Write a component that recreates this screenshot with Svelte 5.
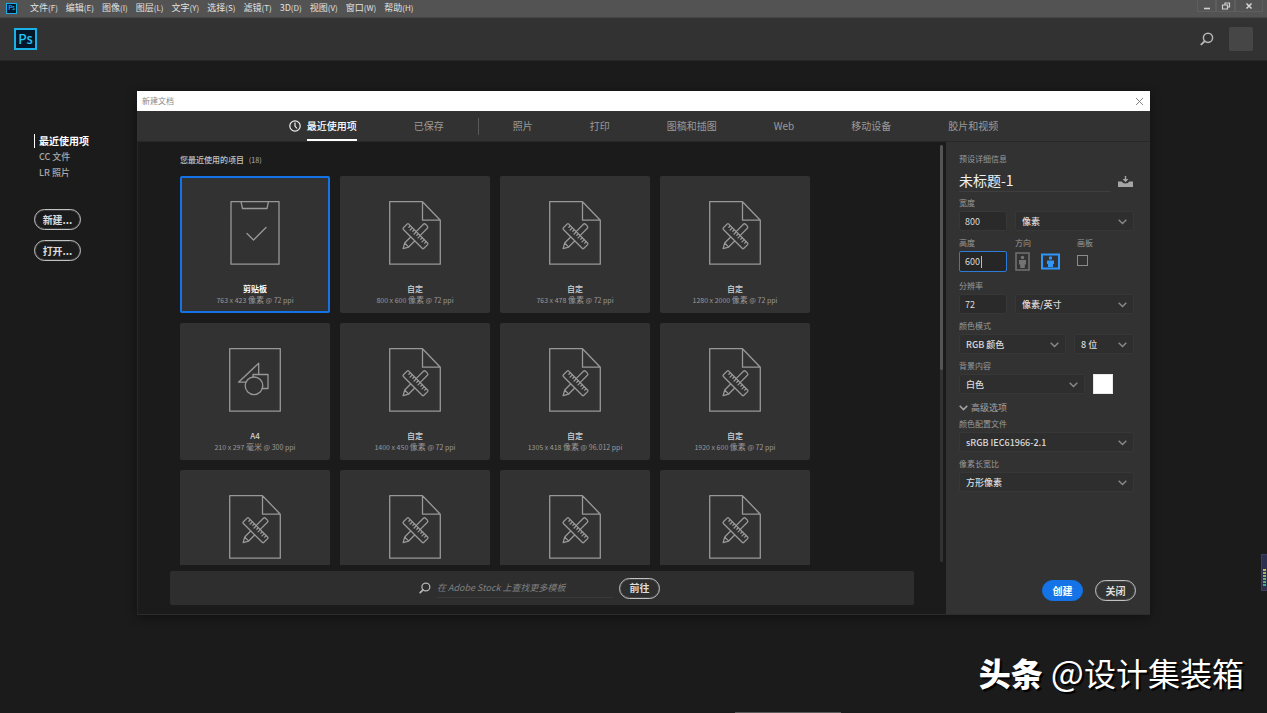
<script>
  const menus = [['文件', '(F)'], ['编辑', '(E)'], ['图像', '(I)'], ['图层', '(L)'], ['文字', '(Y)'], ['选择', '(S)'], ['滤镜', '(T)'], ['3D', '(D)'], ['视图', '(V)'], ['窗口', '(W)'], ['帮助', '(H)']];
  const places = ['最近使用项', 'CC 文件', 'LR 照片'];
  const tabs = ['已保存', '|', '照片', '打印', '图稿和插图', 'Web', '移动设备', '胶片和视频'];
  const presets = [
    { kind: 'clip', name: '剪贴板', size: '763 x 423', unit: '像素', ppi: '72' },
    { kind: 'doc', name: '自定', size: '800 x 600', unit: '像素', ppi: '72' },
    { kind: 'doc', name: '自定', size: '763 x 478', unit: '像素', ppi: '72' },
    { kind: 'doc', name: '自定', size: '1280 x 2000', unit: '像素', ppi: '72' },
    { kind: 'print', name: 'A4', size: '210 x 297', unit: '毫米', ppi: '300' },
    { kind: 'doc', name: '自定', size: '1400 x 450', unit: '像素', ppi: '72' },
    { kind: 'doc', name: '自定', size: '1305 x 418', unit: '像素', ppi: '96.012' },
    { kind: 'doc', name: '自定', size: '1920 x 600', unit: '像素', ppi: '72' },
    { kind: 'doc' },
    { kind: 'doc' },
    { kind: 'doc' },
    { kind: 'doc' }
  ];
  let selected = $state(0);
  let docName = $state('未标题-1');
  let width = $state('800');
  let height = $state('600');
  let resolution = $state('72');
</script>

{#snippet search()}
  <svg class="search" width="14" height="14" viewBox="0 0 14 14" fill="none" stroke="currentColor" aria-hidden="true">
    <circle cx="8" cy="5.8" r="4.6" stroke-width="1.5" />
    <path d="M4.7 9.1 1.4 12.4" stroke-width="2" stroke-linecap="round" />
  </svg>
{/snippet}

{#snippet picker(id, value)}
  <span class="picker">
    <select {id} aria-label={value}><option>{value}</option></select>
    <svg width="9" height="6" viewBox="0 0 9 6" fill="none" stroke="#8a8a8a" stroke-width="1.4" aria-hidden="true"><path d="M.7.8 4.5 4.6 8.3.8" /></svg>
  </span>
{/snippet}

{#snippet art(kind)}
  <svg width="52" height="64" viewBox="0 0 52 64" fill="none" stroke="#989898" stroke-width="1.3" stroke-linejoin="round" stroke-linecap="round" aria-hidden="true">
    {#if kind === 'clip'}
      <path d="M2 .7h48v62.500H2zM12 .7 13.500 7.500h24.500L39.500 .7" />
      <path d="m18 32.500 6.500 6.500 12.500-12.500" />
    {:else if kind === 'print'}
      <path d="M.7 .7h50.600v62.500H.7z" />
      <path d="M17 34.200H9.500L29.700 15.200V26.200M24 29.200V26.500h15v14h-6" />
      <circle cx="25" cy="37.800" r="8.800" />
    {:else}
      <path d="M.7 .7h32.800L51.300 19.200v44H.7zM33.500 .7v18.500h17.800" />
      <g transform="translate(26.500 35.200) rotate(45)" stroke-width="1.3">
        <rect x="-14.500" y="-3.800" width="29" height="7.600" rx="1.200" />
        <path d="M-11-3.800v2.200M-8.200-3.800v3.200M-5.400-3.800v2.200M-2.600-3.800v3.200M.2-3.800v2.200M3-3.800v3.200M5.800-3.800v2.200M8.600-3.800v3.200M11.400-3.800v2.200" />
        <path d="M-2.800-4v-10q0-1.500 1.500-1.500h2.600q1.500 0 1.500 1.500v10M-2.800 4v8.500L0 17.500l2.800-5V4M-2.600 12.500h5.200" />
      </g>
    {/if}
  </svg>
{/snippet}

<div class="app">
  <nav class="menubar">
    <span class="ps small">Ps</span>
    {#each menus as [m, k]}<button>{m}<kbd>{k}</kbd></button>{/each}
    <span class="wins">
      <button aria-label="最小化"><svg width="10" height="10" viewBox="0 0 10 10"><path d="M2 7.500h6" stroke="#d0d0d0" stroke-width="1.600" /></svg></button>
      <button aria-label="还原"><svg width="10" height="10" viewBox="0 0 10 10" fill="none" stroke="#d0d0d0" stroke-width="1.200"><path d="M4 4V2h4.500v4h-2M1.500 4h5v4h-5z" /></svg></button>
      <button aria-label="关闭窗口"><svg width="10" height="10" viewBox="0 0 10 10"><path d="m2.500 2.500 5 5m0-5-5 5" stroke="#d8d8d8" stroke-width="1.500" /></svg></button>
    </span>
  </nav>

  <header>
    <span class="ps">Ps</span>
    <button class="find" aria-label="搜索">{@render search()}</button>
    <button class="avatar" aria-label="帐户"></button>
  </header>

  <main>
    <aside>
      <nav class="places">
        {#each places as p, i}<a href="#top" class:on={i === 0}>{p}</a>{/each}
      </nav>
      <button class="pill">新建...</button>
      <button class="pill">打开...</button>
    </aside>

    <section class="dialog">
      <div class="titlebar">
        <h1>新建文档</h1>
        <button aria-label="关闭对话框"><svg width="9" height="9" viewBox="0 0 9 9"><path d="m1 1 7 7m0-7L1 8" stroke="#777" stroke-width=".9" /></svg></button>
      </div>
      <nav class="tabs">
        <button class="tab on">
          <svg width="12" height="12" viewBox="0 0 12 12" fill="none" stroke="#f0f0f0" stroke-width="1.200" aria-hidden="true"><circle cx="6" cy="6" r="5.200" /><path d="M6 2.500V6l2 2.500" /></svg>
          <span>最近使用项</span>
        </button>
        {#each tabs as t}
          {#if t === '|'}<i class="rule"></i>{:else}<button class="tab">{t}</button>{/if}
        {/each}
      </nav>

      <div class="body">
        <div class="browse">
          <div class="scroll">
            <div class="list">
              <h2>您最近使用的项目 <small>(18)</small></h2>
              <div class="grid">
                {#each presets as p, i}
                  <button class="card" class:sel={selected === i} aria-label={p.name ?? '自定'} onclick={() => (selected = i)}>
                    {@render art(p.kind)}
                    {#if p.name}<strong>{p.name}</strong><span>{p.size} <em>{p.unit}</em> @ {p.ppi} ppi</span>{/if}
                  </button>
                {/each}
              </div>
            </div>
            <div class="track"><div class="thumb"></div></div>
          </div>
          <form class="stock">
            {@render search()}
            <input aria-label="搜索模板" placeholder="在 Adobe Stock 上查找更多模板" />
            <button type="button" class="pill">前往</button>
          </form>
        </div>

        <form class="details">
          <h3>预设详细信息</h3>
          <div class="name">
            <input aria-label="名称" bind:value={docName} />
            <button type="button" aria-label="存储预设">
              <svg width="15" height="11" viewBox="0 0 15 11" fill="#a5a5a5"><path d="M0 5.500h3.800q.7 2 3.700 2t3.700-2H15V11H0z" /><path d="M6.800 0h1.400v3h2.200L7.500 6.300 4.600 3h2.200z" /></svg>
            </button>
          </div>

          <div class="row">
            <div class="field num"><label for="w">宽度</label><input id="w" bind:value={width} /></div>
            <div class="field grow"><label for="unit" class="blank">单位</label>{@render picker('unit', '像素')}</div>
          </div>
          <div class="row orient">
            <div class="field num"><label for="h">高度</label><span class="focus"><input id="h" bind:value={height} /><i></i></span></div>
            <div class="field dir">
              <span class="label">方向</span>
              <div>
                <button type="button" aria-label="纵向"><svg width="15" height="19" viewBox="0 0 15 19" fill="#737373"><path d="M1 1h13v17H1z" fill="none" stroke="#737373" stroke-width="1.500" /><circle cx="7.500" cy="5.500" r="1.800" /><path d="M4 8h7v4.500H9.800V16H5.200v-3.500H4z" /></svg></button>
                <button type="button" aria-label="横向"><svg width="19" height="17" viewBox="0 0 19 17" fill="#2f96fb"><path d="M1 1.500h17v14H1z" fill="none" stroke="#2f96fb" stroke-width="2" /><circle cx="9.500" cy="5" r="1.700" /><path d="M6 7.500h7v3.500h-1V14H7v-3H6z" /></svg></button>
              </div>
            </div>
            <div class="field"><label for="ab">画板</label><input id="ab" type="checkbox" /></div>
          </div>
          <div class="row">
            <div class="field num"><label for="r">分辨率</label><input id="r" bind:value={resolution} /></div>
            <div class="field grow"><label for="runit" class="blank">单位</label>{@render picker('runit', '像素/英寸')}</div>
          </div>
          <div class="row">
            <div class="field grow"><label for="mode">颜色模式</label>{@render picker('mode', 'RGB 颜色')}</div>
            <div class="field depth"><label for="depth" class="blank">位深</label>{@render picker('depth', '8 位')}</div>
          </div>
          <div class="row">
            <div class="field bg"><label for="bg">背景内容</label>{@render picker('bg', '白色')}</div>
            <button type="button" class="swatch" aria-label="背景颜色"></button>
          </div>
          <button type="button" class="more">
            <svg width="9" height="6" viewBox="0 0 9 6" fill="none" stroke="#a5a5a5" stroke-width="1.600" aria-hidden="true"><path d="M.7.8 4.500 4.600 8.300.8" /></svg>高级选项
          </button>
          <div class="row">
            <div class="field grow"><label for="profile">颜色配置文件</label>{@render picker('profile', 'sRGB IEC61966-2.1')}</div>
          </div>
          <div class="row">
            <div class="field grow"><label for="aspect">像素长宽比</label>{@render picker('aspect', '方形像素')}</div>
          </div>
          <div class="actions">
            <button type="button" class="pill primary">创建</button>
            <button type="button" class="pill">关闭</button>
          </div>
        </form>
      </div>
    </section>
  </main>

  <p class="mark"><b>头条</b><span><i>@</i>设计集装箱</span></p>
  <div class="meter"><i></i></div>
  <div class="dock"></div>
</div>

<style>
  :global(body) { background: #1b1b1b; }
  .app, .app * { box-sizing: border-box; }
  .app {
    position: relative;
    height: 100vh;
    min-height: 600px;
    display: flex;
    flex-direction: column;
    overflow: hidden;
    background: #1b1b1b;
    color: #d0d0d0;
    font: 9px/12px "Noto Sans CJK SC", sans-serif;
  }
  button, input, select { font: inherit; color: inherit; background: none; border: 0; padding: 0; margin: 0; outline: 0; }
  h1, h2, h3, p { margin: 0; font-weight: 400; }
  em, .mark i { font-style: normal; }
  svg { display: block; flex: none; }

  .menubar { height: 18px; flex: none; display: flex; align-items: center; gap: 8px; padding: 0 4px 0 6px; background: #535353; color: #e2e2e2; border-bottom: 1px solid #454545; }
  .menubar > button { line-height: 14px; padding-bottom: 2px; white-space: nowrap; }
  kbd { font-family: inherit; font-size: 8px; }
  .ps { width: 23px; height: 22px; border: 2px solid #19b1e6; background: #03162a; color: #21c4f4; font-size: 13px; font-weight: 500; line-height: 17px; text-align: center; }
  .ps.small { width: 11px; height: 11px; border-width: 1px; font-size: 6px; line-height: 8px; margin-right: 5px; }
  .wins { margin-left: auto; display: flex; align-self: stretch; padding-bottom: 5px; }
  .wins button { width: 19px; display: grid; place-items: center; border: 1px solid #5e5e5e; border-top: 0; }
  .wins button:last-child { width: 28px; }

  header { height: 43px; flex: none; display: flex; align-items: center; padding: 0 14px; background: #323232; border-bottom: 1px solid #282828; }
  .find { margin-left: auto; margin-right: 15px; color: #b5b5b5; }
  .avatar { width: 24px; height: 24px; background: #464646; border-radius: 2px; }

  main { flex: 1; min-height: 0; display: flex; padding: 30px 117px 98px 0; }
  aside { width: 137px; flex: none; padding: 43px 0 0 34px; display: flex; flex-direction: column; align-items: flex-start; gap: 10px; }
  .places { display: flex; flex-direction: column; gap: 2px; margin-bottom: 19px; }
  .places a { color: #a8a8a8; text-decoration: none; line-height: 14px; padding-left: 4px; border-left: 1px solid transparent; font-weight: 500; }
  .places a.on { color: #fff; font-size: 10px; font-weight: 700; border-color: #fff; }
  .pill { height: 21px; min-width: 41px; padding: 0 7px; border: 1px solid #c2c2c2; border-radius: 11px; color: #dcdcdc; font-size: 10px; font-weight: 700; line-height: 18px; box-shadow: inset 0 0 0 1px #77777755; }
  aside .pill { min-width: 47px; }
  .pill.primary { background: #1473e6; border-color: #1473e6; color: #fff; box-shadow: none; }

  .dialog { flex: 1; min-width: 0; display: flex; flex-direction: column; border-bottom: 1px solid #2c2c2c; box-shadow: 0 2px 10px #0006; }
  .titlebar { height: 20px; flex: none; display: flex; align-items: center; justify-content: space-between; padding: 0 6px 0 5px; background: #fff; }
  .titlebar h1 { font-size: 8px; color: #8a8a8a; }
  .tabs { height: 31px; flex: none; display: flex; justify-content: center; gap: 57px; background: #323232; border-bottom: 1px solid #282828; }
  .tab { display: flex; align-items: center; gap: 6px; font-size: 10px; color: #9a9a9a; white-space: nowrap; }
  .tab.on { color: #fff; font-weight: 500; }
  .tab.on span { align-self: stretch; line-height: 29px; border-bottom: 2px solid #fff; }
  .rule { width: 1px; height: 17px; margin: 7px -23px; background: #5a5a5a; }

  .body { flex: 1; min-height: 0; display: flex; border-left: 1px solid #262626; }
  .browse { flex: 1; min-width: 0; display: flex; flex-direction: column; }
  .scroll { flex: 1; min-height: 0; display: flex; padding-right: 3px; }
  .list { flex: 1; min-width: 0; overflow: hidden; padding: 12px 0 0 42px; }
  h2 { font-size: 8px; font-weight: 500; color: #c4c4c4; margin-bottom: 10px; }
  small { font-size: 7px; margin-left: 3px; color: #999; }
  .grid { display: grid; grid-template-columns: repeat(auto-fill, 150px); gap: 10px; }
  .card { height: 137px; display: flex; flex-direction: column; align-items: center; justify-content: flex-start; padding-top: 25px; background: #323232; border-radius: 2px; font-size: 7px; line-height: 10px; color: #999; }
  .card.sel { box-shadow: inset 0 0 0 2px #1473e6; }
  .card em { font-size: 8px; }
  .card strong { font-size: 8px; line-height: 12px; font-weight: 500; color: #d0d0d0; margin-top: 18px; }
  .card.sel strong { color: #fff; font-weight: 700; }
  .track { width: 3px; margin: 3px 0; background: #323232; border-radius: 2px; }
  .thumb { height: 54%; background: #555; border-radius: 2px; }
  .stock { height: 34px; flex: none; margin: 6px 32px 9px; padding-right: 5px; display: flex; align-items: center; justify-content: center; background: #2e2e2e; border-radius: 2px; color: #b5b5b5; }
  .stock .search { width: 12px; height: 12px; margin-right: 6px; }
  .stock input { width: 176px; height: 20px; border-bottom: 1px solid #3a3a3a; font-style: italic; color: #ccc; margin-right: 6px; }
  .stock input::placeholder { color: #808080; opacity: 1; }

  .details { width: 204px; flex: none; padding: 11px 16px 13px 13px; background: #323232; display: flex; flex-direction: column; }
  h3, label, .label { font-size: 8px; line-height: 12px; color: #9a9a9a; }
  .blank { visibility: hidden; }
  .name { display: flex; align-items: center; gap: 7px; margin: 6px 0 5px; padding-right: 1px; }
  .name input { flex: 1; min-width: 0; height: 21px; padding-bottom: 2px; font-size: 14px; color: #f0f0f0; border-bottom: 1px solid #3e3e3e; }
  .row { display: flex; gap: 8px; margin-bottom: 6px; }
  .row.orient { margin-bottom: 8px; }
  .field { display: flex; flex-direction: column; gap: 2px; }
  .grow { flex: 1; min-width: 0; }
  .num { width: 48px; }
  .depth { width: 60px; }
  .bg { width: 126px; }
  .field input:not([type]) { width: 100%; height: 20px; padding-left: 5px; background: #2a2a2a; border: 1px solid #373737; border-radius: 2px; color: #dadada; }
  .focus { position: relative; }
  .field .focus input:not([type]) { height: 21px; background: #262626; border-color: #2d7bd6; }
  .focus i { position: absolute; left: 22px; top: 5px; width: 1px; height: 12px; background: #bbb; }
  .picker { position: relative; display: block; }
  .picker select { appearance: none; display: block; width: 100%; height: 20px; padding: 2px 20px 0 6px; background: #2e2e2e; border: 1px solid #373737; border-radius: 2px; color: #dadada; font-weight: 500; }
  .picker svg { position: absolute; right: 7px; top: 8px; pointer-events: none; }
  .dir { width: 54px; }
  .dir div { display: flex; align-items: center; gap: 11px; height: 21px; }
  .field input[type="checkbox"] { appearance: none; width: 11px; height: 11px; border: 1px solid #8a8a8a; margin-top: 4px; }
  .swatch { width: 20px; height: 20px; background: #fff; border: 1px solid #e8e8e8; align-self: flex-end; }
  .more { display: flex; align-items: center; gap: 3px; color: #a5a5a5; margin: 2px 0 4px; line-height: 12px; }
  .actions { margin-top: auto; display: flex; justify-content: flex-end; gap: 12px; margin-right: -2px; }

  .mark { position: absolute; right: 23px; bottom: 18px; display: flex; gap: 8px; font-size: 32px; line-height: 46px; color: #fff; text-shadow: 2px 2px 1px #000; white-space: nowrap; }
  .mark b { font-weight: 900; }
  .mark i { font-size: 35px; line-height: 32px; }
  .meter { position: absolute; right: 0; top: 554px; width: 6px; height: 37px; padding: 14px 1px 4px 1px; background: #2c3050; border: 1px solid #3a3d60; border-right: 0; }
  .meter i { display: block; height: 100%; background: repeating-linear-gradient(#0000 0 2px, #2c3050 2px 3px), linear-gradient(#c9b94a, #2fae8c); }
  .dock { position: absolute; bottom: 0; left: 58%; width: 106px; height: 1px; background: #5a5a5a; }
</style>
